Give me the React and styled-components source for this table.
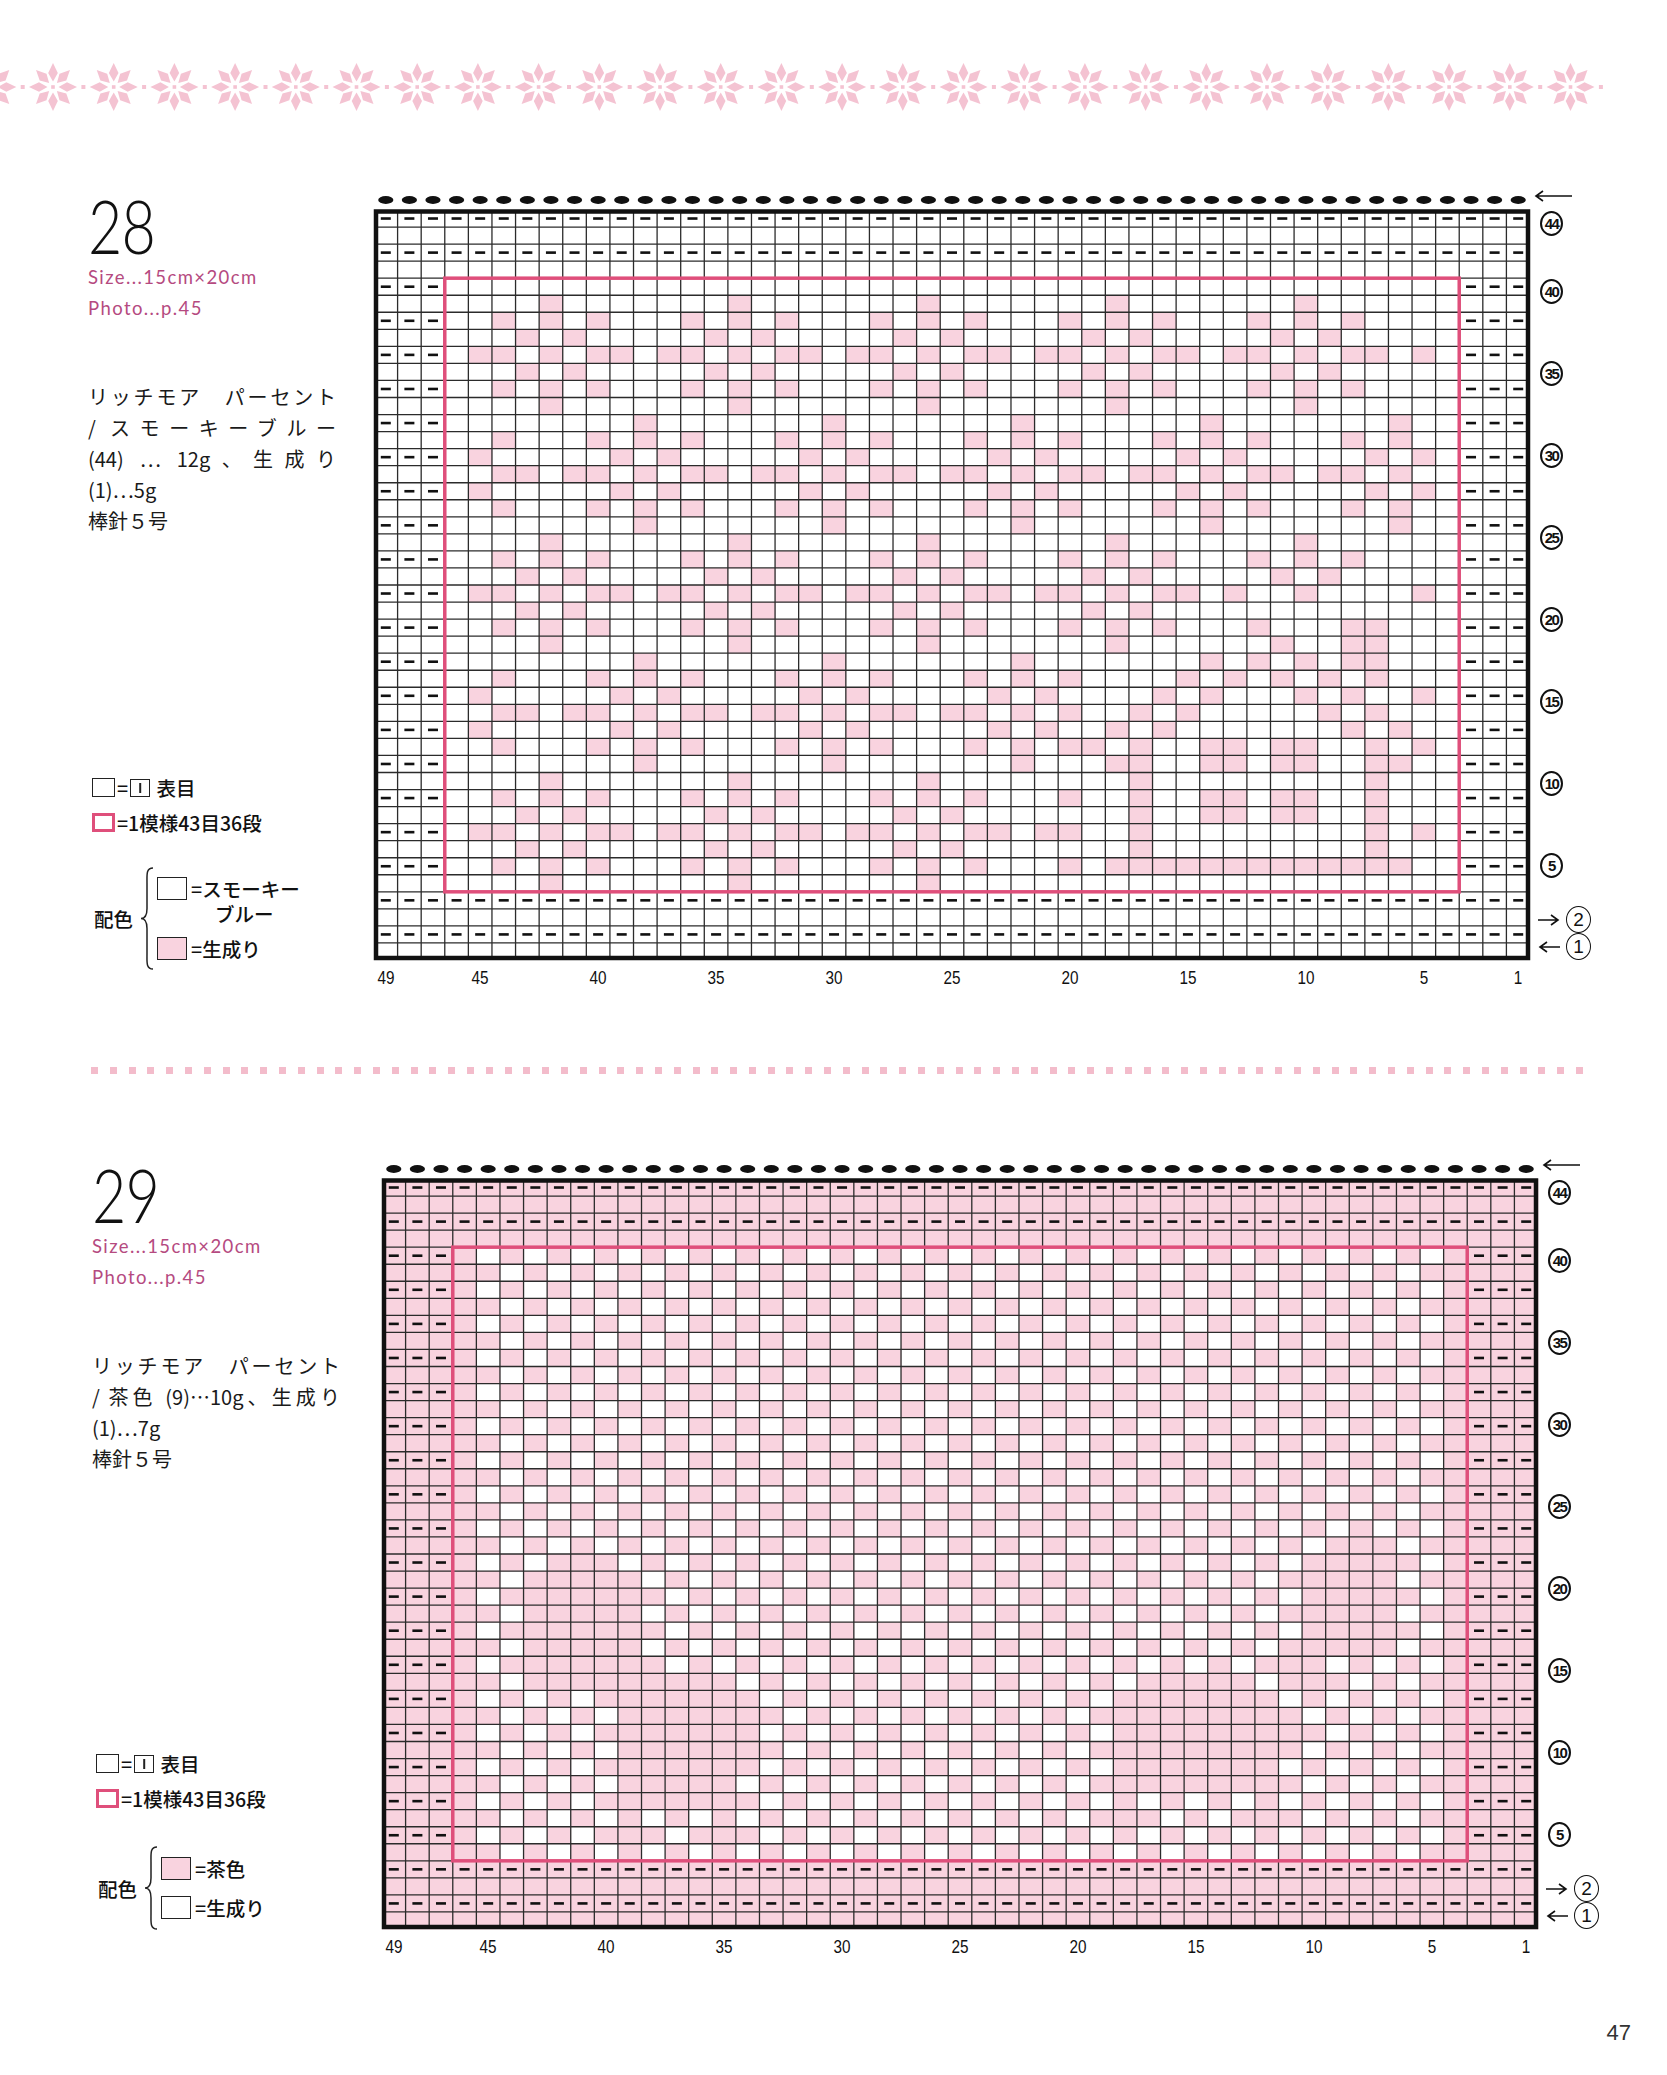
import styled, { createGlobalStyle } from "styled-components";

const CW = 1156 / 49;
const CH = 750 / 44;
const PINK = "#f9d3df";
const FRAME = "#df4f7b";

const GlobalStyle = createGlobalStyle`
  body {
    margin: 0;
    background: #fff;
    font-family: "Noto Sans CJK JP", "Noto Sans", sans-serif;
  }
`;

/// snowflake motif, the same shape is used in chart 28
const SHAPE = new Set([
  "-3,0", "-2,-2", "-2,0", "-2,2", "-1,-1", "-1,1",
  "0,-3", "0,-2", "0,0", "0,2", "0,3",
  "1,-1", "1,1", "2,-2", "2,0", "2,2", "3,0",
]);

const HOUSE = {
  18: [28, 30, 31, 33, 36, 41],
  19: [27, 29],
  20: [28, 30, 34, 38, 39],
  21: [28, 35, 38, 39],
  22: [32, 34, 36, 38, 39],
  23: [31, 33, 35, 37, 39],
  24: [30, 32, 36, 38, 41],
  25: [29, 31, 37, 39],
  26: [28, 30, 38, 40],
  27: [27, 29, 32, 33, 35, 36, 39, 41],
  28: [28, 29, 32, 33, 35, 36, 39, 40],
  29: [29, 39],
  30: [29, 32, 33, 35, 36, 39],
  31: [29, 32, 33, 35, 36, 39],
  32: [29, 39, 41],
  33: [29, 39],
  34: [28, 29, 30, 31, 32, 33, 34, 35, 36, 37, 38, 39, 40],
  35: [],
};

const hitMotif = (c, r, cols, rows) =>
  rows.some((cy) =>
    cols.some((cx) => SHAPE.has(`${r - cy},${c - cx}`))
  );

const pink28 = (c, r) => {
  if (c <= 0 || c >= 42) return false;
  if (r >= 18 && c >= 27 && c <= 41) return HOUSE[r].includes(c);
  return (
    hitMotif(c, r, [-4, 4, 12, 20, 28, 36, 44], [4, 18, 32]) ||
    hitMotif(c, r, [0, 8, 16, 24, 32, 40], [11, 25])
  );
};

const BLOBS = [
  { c: 4.8, r: 21.5, rx: 2.4, ry: 4.2 },
  { c: 7, r: 25.3, rx: 1.6, ry: 1.6 },
  { c: 9.5, r: 28.5, rx: 2.9, ry: 3.6 },
  { c: 31.5, r: 28, rx: 3.7, ry: 4 },
  { c: 35.3, r: 24, rx: 1.6, ry: 1.6 },
  { c: 37.6, r: 20, rx: 2.4, ry: 4 },
];
const LEGS = [
  [7, 31, 35], [11, 31, 35], [28, 31, 34], [34, 31, 34],
];

const pink29 = (c, r) => {
  if (c === 0 || c === 42) return true;
  if (BLOBS.some((b) => ((c - b.c) / b.rx) ** 2 + ((r - b.r) / b.ry) ** 2 <= 1)) return true;
  if (LEGS.some(([lc, a, z]) => c === lc && r >= a && r <= z)) return true;
  return (c + r) % 2 === 0;
};

const KnitChart = ({ isPink, fillBorder }) => {
  const cells = [];
  const dashes = [];
  for (let t = 0; t < 44; t++) {
    for (let L = 0; L < 49; L++) {
      const inPat = L >= 3 && L <= 45 && t >= 4 && t <= 39;
      const pink = inPat ? isPink(L - 3, t - 4) : fillBorder;
      if (pink)
        cells.push(
          <rect key={`c${t}-${L}`} x={L * CW} y={t * CH} width={CW + 0.4} height={CH + 0.4} fill={PINK} />
        );
      const full = t === 0 || t === 2 || t === 40 || t === 42;
      const side = t >= 4 && t <= 38 && t % 2 === 0 && (L < 3 || L > 45);
      if (full || side)
        dashes.push(
          <rect key={`d${t}-${L}`} x={L * CW + CW / 2 - 5} y={t * CH + CH / 2 - 1.3} width={10} height={2.6} fill="#111" />
        );
    }
  }
  const lines = [];
  for (let i = 1; i < 49; i++)
    lines.push(<line key={`v${i}`} x1={i * CW} y1={0} x2={i * CW} y2={750} />);
  for (let j = 1; j < 44; j++)
    lines.push(<line key={`h${j}`} x1={0} y1={j * CH} x2={1156} y2={j * CH} />);

  return (
    <ChartSvg width="1156" height="750" viewBox="0 0 1156 750">
      <rect x="0" y="0" width="1156" height="750" fill="#fff" />
      {cells}
      <g stroke="#2b2b2b" strokeWidth="1.3">{lines}</g>
      {dashes}
      <rect x={3 * CW} y={4 * CH} width={43 * CW} height={36 * CH} fill="none" stroke={FRAME} strokeWidth="3.5" />
      <rect x="2" y="1.5" width="1152" height="746.5" fill="none" stroke="#111" strokeWidth="4.5" />
    </ChartSvg>
  );
};

const Arrow = ({ dir, w = 22 }) => (
  <ArrowSvg width={w} height="12" viewBox={`0 0 ${w} 12`}>
    {dir === "left" ? (
      <path d={`M${w} 6H2M9 1L2 6l7 5`} fill="none" stroke="#111" strokeWidth="1.6" />
    ) : (
      <path d={`M0 6h${w - 2}M${w - 9} 1l7 5-7 5`} fill="none" stroke="#111" strokeWidth="1.6" />
    )}
  </ArrowSvg>
);

const ROW_MARKS = [44, 40, 35, 30, 25, 20, 15, 10, 5];
const COL_MARKS = [49, 45, 40, 35, 30, 25, 20, 15, 10, 5, 1];

const Chart = ({ isPink, fillBorder }) => (
  <ChartArea>
    <ChartSvg width="1156" height="20">
      {Array.from({ length: 49 }, (_, i) => (
        <ellipse key={i} cx={(i + 0.5) * CW} cy="10" rx="7.6" ry="3.9" fill="#111" />
      ))}
    </ChartSvg>
    <TopArrow>
      <Arrow dir="left" w={38} />
    </TopArrow>
    <KnitChart isPink={isPink} fillBorder={fillBorder} />
    <RowLabels>
      {ROW_MARKS.map((n) => (
        <RowLabel key={n} $row={45 - n} $pl={10}>
          <Circled $size={23} $fs={15} $bold>{n}</Circled>
        </RowLabel>
      ))}
      <RowLabel $row={43} $pl={8}>
        <Arrow dir="right" />
        <Circled $size={25} $fs={19}>2</Circled>
      </RowLabel>
      <RowLabel $row={44} $pl={8}>
        <Arrow dir="left" />
        <Circled $size={25} $fs={19}>1</Circled>
      </RowLabel>
    </RowLabels>
    <ColNumbers>
      {COL_MARKS.map((n) => (
        <ColNum key={n} $col={50 - n}>{n}</ColNum>
      ))}
    </ColNumbers>
  </ChartArea>
);

const Brace = ({ h }) => (
  <BraceSvg width="16" height={h} viewBox={`0 0 16 ${h}`}>
    <path
      d={`M14 1C7 1 8 8 8 16V${h / 2 - 10}C8 ${h / 2 - 3} 6 ${h / 2} 2 ${h / 2}C6 ${h / 2} 8 ${h / 2 + 3} 8 ${h / 2 + 10}V${h - 16}C8 ${h - 8} 7 ${h - 1} 14 ${h - 1}`}
      fill="none"
      stroke="#222"
      strokeWidth="1.5"
    />
  </BraceSvg>
);

const Legend = ({ mt, children, braceH, schemeMt, gap }) => (
  <LegendBox $mt={mt}>
    <KeyRow>
      <Swatch />
      <span>=</span>
      <KnitMark $w={20} $h={18} />
      <span>&nbsp;表目</span>
    </KeyRow>
    <KeyRow>
      <Swatch $frame />
      <span>=1模様43目36段</span>
    </KeyRow>
    <Scheme $mt={schemeMt}>
      <SchemeLabel>配色</SchemeLabel>
      <Brace h={braceH} />
      <SchemeItems $gap={gap}>{children}</SchemeItems>
    </Scheme>
  </LegendBox>
);

const Flakes = () => {
  const items = [];
  for (let k = 0; k < 27; k++) {
    const x = -7.7 + 60.7 * k;
    items.push(
      <g key={k} transform={`translate(${x} 27)`}>
        {Array.from({ length: 8 }, (_, i) => (
          <polygon key={i} points="0,-5.5 4.8,-14 0,-24 -4.8,-14" transform={`rotate(${i * 45})`} />
        ))}
        <rect x="-1.8" y="-1.8" width="3.6" height="3.6" />
        <rect x="28.4" y="-2" width="4" height="4" />
      </g>
    );
  }
  return (
    <FlakeBand viewBox="0 0 1667 54">
      <g fill="#f4c3d2">{items}</g>
    </FlakeBand>
  );
};

const App = () => (
  <>
    <GlobalStyle />
    <Page>
      <Flakes />

      <Section $top={76} $pad={88}>
        <InfoCol $w={286}>
          <Number>28</Number>
          <Meta $mt={3}>Size...15cm×20cm</Meta>
          <Meta $mt={1}>Photo...p.45</Meta>
          <Materials>
            <MatLine $just>リッチモア　パーセント</MatLine>
            <MatLine $just>/ スモーキーブルー</MatLine>
            <MatLine $just>(44) … 12g、生成り</MatLine>
            <MatLine>(1)…5g</MatLine>
            <MatLine>棒針５号</MatLine>
          </Materials>
          <Legend mt={234} braceH={103} schemeMt={27} gap={10}>
            <SchemeItem>
              <Swatch $w={30} $h={23} />
              <div>
                <div>=スモーキー</div>
                <SubLine>ブルー</SubLine>
              </div>
            </SchemeItem>
            <SchemeItem>
              <Swatch $w={30} $h={23} $fill={PINK} />
              <div>=生成り</div>
            </SchemeItem>
          </Legend>
        </InfoCol>
        <Chart isPink={pink28} fillBorder={false} />
      </Section>

      <Divider>
        {Array.from({ length: 80 }, (_, i) => (
          <DividerDot key={i} />
        ))}
      </Divider>

      <Section $top={85} $pad={92}>
        <InfoCol $w={290}>
          <Number>29</Number>
          <Meta $mt={3}>Size...15cm×20cm</Meta>
          <Meta $mt={1}>Photo...p.45</Meta>
          <Materials>
            <MatLine $just>リッチモア　パーセント</MatLine>
            <MatLine $just>/ 茶色 (9)…10g、生成り</MatLine>
            <MatLine>(1)…7g</MatLine>
            <MatLine>棒針５号</MatLine>
          </Materials>
          <Legend mt={272} braceH={84} schemeMt={30} gap={14}>
            <SchemeItem>
              <Swatch $w={30} $h={23} $fill={PINK} />
              <div>=茶色</div>
            </SchemeItem>
            <SchemeItem>
              <Swatch $w={30} $h={23} />
              <div>=生成り</div>
            </SchemeItem>
          </Legend>
        </InfoCol>
        <Chart isPink={pink29} fillBorder />
      </Section>

      <Footer>47</Footer>
    </Page>
  </>
);

const Page = styled.div`
  width: 1667px;
  min-height: 2075px;
  padding-top: 60px;
  box-sizing: border-box;
  background: #fff;
  overflow: hidden;
`;

const FlakeBand = styled.svg`
  display: block;
  width: 1667px;
  height: 54px;
`;

const Section = styled.section`
  display: flex;
  align-items: flex-start;
  margin-top: ${(p) => p.$top}px;
  padding-left: ${(p) => p.$pad}px;
`;

const InfoCol = styled.div`
  width: ${(p) => p.$w}px;
  flex-shrink: 0;
  display: flex;
  flex-direction: column;
`;

const Number = styled.div`
  margin-top: 3px;
  font-family: Lato, "Open Sans", sans-serif;
  font-weight: 300;
  font-size: 74px;
  line-height: 66px;
  letter-spacing: -1px;
  color: #111;
  transform: scaleX(0.8);
  transform-origin: left center;
`;

const Meta = styled.div`
  margin-top: ${(p) => p.$mt}px;
  font-family: Lato, "Open Sans", sans-serif;
  font-size: 18.5px;
  line-height: 30px;
  letter-spacing: 1.4px;
  color: #b54a80;
`;

const Materials = styled.div`
  margin-top: 58px;
  width: 248px;
  font-family: "Noto Sans CJK JP", sans-serif;
  font-size: 20px;
  line-height: 31px;
  color: #1a1a1a;
`;

const MatLine = styled.div`
  text-align: ${(p) => (p.$just ? "justify" : "left")};
  text-align-last: ${(p) => (p.$just ? "justify" : "auto")};
`;

const LegendBox = styled.div`
  margin-top: ${(p) => p.$mt}px;
  font-family: "Noto Sans CJK JP", sans-serif;
  font-size: 19.5px;
  font-weight: 500;
  color: #111;
`;

const KeyRow = styled.div`
  display: flex;
  align-items: center;
  gap: 2px;
  height: 35px;
  padding-left: 4px;
`;

const Swatch = styled.span`
  display: inline-block;
  position: relative;
  flex-shrink: 0;
  box-sizing: border-box;
  width: ${(p) => p.$w || 23}px;
  height: ${(p) => p.$h || 19}px;
  border: ${(p) => (p.$frame ? `3px solid ${FRAME}` : "1.6px solid #222")};
  background: ${(p) => p.$fill || "#fff"};
`;

const KnitMark = styled(Swatch)`
  &::after {
    content: "";
    position: absolute;
    left: 50%;
    top: 3px;
    bottom: 3px;
    width: 1.6px;
    background: #222;
    transform: translateX(-50%);
  }
`;

const Scheme = styled.div`
  display: flex;
  align-items: center;
  margin-top: ${(p) => p.$mt}px;
  padding-left: 6px;
`;

const SchemeLabel = styled.span`
  margin-right: 6px;
`;

const BraceSvg = styled.svg`
  display: block;
  flex-shrink: 0;
`;

const SchemeItems = styled.div`
  display: flex;
  flex-direction: column;
  gap: ${(p) => p.$gap}px;
  margin-left: 2px;
`;

const SchemeItem = styled.div`
  display: flex;
  align-items: flex-start;
  gap: 4px;
  line-height: 25px;

  & > ${Swatch} {
    margin-top: 1px;
  }
`;

const SubLine = styled.div`
  padding-left: 24px;
`;

const ChartArea = styled.div`
  display: grid;
  grid-template-columns: 1156px 80px;
  grid-template-rows: 20px 750px 36px;
`;

const ChartSvg = styled.svg`
  display: block;
  overflow: visible;
`;

const ArrowSvg = styled.svg`
  display: block;
  flex-shrink: 0;
`;

const TopArrow = styled.div`
  display: flex;
  align-items: flex-start;
  padding-left: 4px;
`;

const RowLabels = styled.div`
  display: grid;
  grid-template-rows: repeat(44, 1fr);
  height: 750px;
`;

const RowLabel = styled.div`
  grid-row: ${(p) => p.$row};
  grid-column: 1;
  align-self: center;
  height: 27px;
  display: flex;
  align-items: center;
  gap: 6px;
  padding-left: ${(p) => p.$pl}px;
`;

const Circled = styled.span`
  display: inline-flex;
  align-items: center;
  justify-content: center;
  box-sizing: border-box;
  width: ${(p) => p.$size}px;
  height: ${(p) => p.$size + 2}px;
  border: ${(p) => (p.$bold ? "2.2px" : "1.6px")} solid #111;
  border-radius: 50%;
  font-family: "Liberation Sans", Arial, sans-serif;
  font-weight: ${(p) => (p.$bold ? 700 : 400)};
  font-size: ${(p) => p.$fs}px;
  letter-spacing: ${(p) => (p.$bold ? "-1.5px" : "0")};
  color: #111;
`;

const ColNumbers = styled.div`
  display: grid;
  grid-template-columns: repeat(49, 1fr);
  align-items: center;
`;

const ColNum = styled.span`
  grid-column: ${(p) => p.$col};
  justify-self: center;
  font-family: "Liberation Sans", Arial, sans-serif;
  font-size: 18px;
  line-height: 36px;
  white-space: nowrap;
  color: #111;
  transform: scaleX(0.85);
`;

const Divider = styled.div`
  display: flex;
  gap: 11.8px;
  margin-top: 71px;
  padding-left: 91px;
`;

const DividerDot = styled.span`
  flex-shrink: 0;
  width: 7px;
  height: 7px;
  background: #f3bccb;
`;

const Footer = styled.div`
  margin-top: 53px;
  padding-right: 36px;
  text-align: right;
  font-family: "Liberation Sans", Arial, sans-serif;
  font-size: 22px;
  line-height: 30px;
  color: #333;
`;

export default App;
